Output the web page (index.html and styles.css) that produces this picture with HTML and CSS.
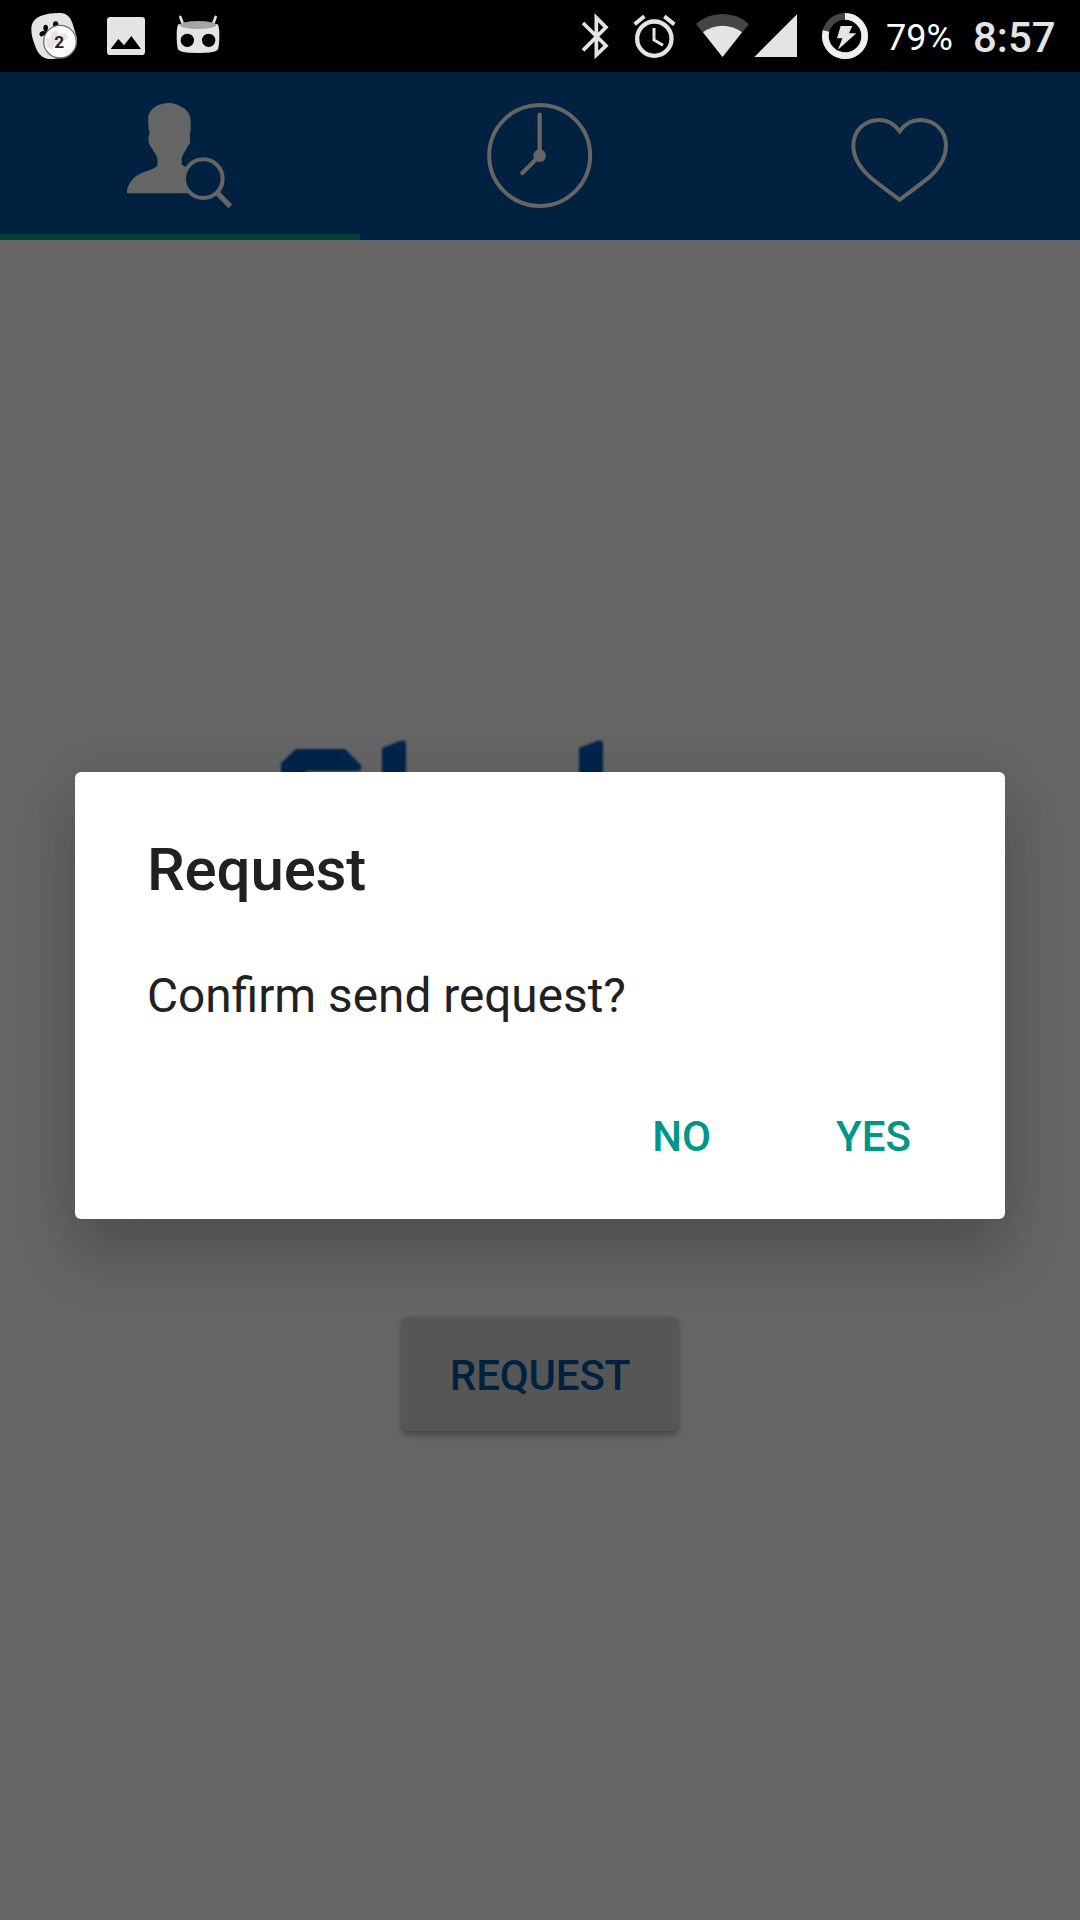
FILE: index.html
```html
<!DOCTYPE html>
<html lang="en">
<head>
<meta charset="utf-8">
<title>Request</title>
<link rel="stylesheet" href="styles.css">
</head>
<body>
<div class="screen">
  <header class="status">
    <div class="notifications">
      <svg class="paw" viewBox="84 0 156 216">
        <path fill="#e4e4e4" d="M94 88C94 68 104 55 124 47C146 39 166 38 184 39C204 41 214 56 220 78L230 112C234 147 214 164 190 170C172 175 160 178 146 177C124 174 112 158 104 134C98 118 94 104 94 88Z"/>
        <ellipse cx="137" cy="84" rx="7" ry="10"/>
        <ellipse cx="127" cy="101" rx="9" ry="7" transform="rotate(-35 127 101)"/>
        <ellipse cx="167" cy="73" rx="8" ry="9"/>
        <path d="M134 88L144 96L132 108Z"/>
        <circle cx="180" cy="125" r="49" fill="#fbfbfb" stroke="#707070" stroke-width="4"/>
        <path fill="#e5e5e5" d="M153 98l18-8 6 14 22-4 7 15-20 9-8 12-15-4-6 17-17-9-5-22 17-5Z"/>
        <text x="178" y="143" class="count">2</text>
      </svg>
      <svg class="picture" viewBox="312 0 132 216">
        <rect x="321" y="51" width="114" height="114" rx="10" fill="#e4e4e4"/>
        <path d="M332 147L355 117L372 136L394 108L423 147Z"/>
      </svg>
      <svg class="robot" viewBox="516 0 156 216">
        <path d="M541 51L548 70M647 51L640 70" stroke="#e4e4e4" stroke-width="8" stroke-linecap="round"/>
        <path fill="#e4e4e4" d="M536 72Q594 88 652 72Q658 76 658 105Q658 135 654 148Q650 159 594 159Q538 159 534 148Q530 135 530 105Q530 76 536 72Z"/>
        <ellipse cx="594" cy="75" rx="55" ry="12" fill="#a5a5a5"/>
        <circle cx="562" cy="121" r="20"/><circle cx="626" cy="121" r="20"/>
      </svg>
    </div>
    <div class="system">
      <svg class="bluetooth" viewBox="60 0 96 216">
        <path d="M69 69L138 137L109 165V53L138 82L69 151" fill="none" stroke="#e4e4e4" stroke-width="11"/>
      </svg>
      <svg class="alarm" viewBox="216 0 132 216">
        <g fill="none" stroke="#e4e4e4">
          <circle cx="283" cy="116" r="51.5" stroke-width="13"/>
          <path stroke-width="12" d="M224 73L253 49M313 49L343 73"/>
          <path stroke-width="9" d="M282 84V120L309 136"/>
        </g>
      </svg>
      <svg class="wifi" viewBox="405 0 168 216">
        <path fill="#454545" d="M408 72Q442 42 487.500 42T567 72L487.500 171Z"/>
        <path fill="#e4e4e4" d="M429 97Q455 77 487.500 77T546 97L487.500 171Z"/>
      </svg>
      <svg class="signal" viewBox="579 0 138 216">
        <path fill="#e4e4e4" d="M583 171L711 43V171Z"/>
      </svg>
      <svg class="battery" viewBox="30 0 150 216">
        <circle cx="105" cy="108" r="59" fill="none" stroke="#454545" stroke-width="20"/>
        <path d="M105 49A59 59 0 1 1 48 93" fill="none" stroke="#efefef" stroke-width="20"/>
        <path fill="#e4e4e4" d="M92 78H127L117 100H139L84 149L97 115H81Z"/>
      </svg>
      <span class="percent">79%</span>
      <span class="time">8:57</span>
    </div>
  </header>

  <nav class="tabs">
    <div class="tab active">
      <svg viewBox="81 69 318 318">
        <path fill="#656565" d="M81 340V330C88 304 106 286 130 277C151 269 163 266 172 257V233C164 215 151 201 147 190C144 176 145 169 149 160C144 143 144 126 145 109C151 84 176 69 208 69C225 69 237 77 249 83C263 91 270 104 272 119V150C268 162 270 172 270 188C263 202 251 217 245 234V254L263 264Q244 300 266 340Z"/>
        <g stroke="#656565">
          <circle cx="310" cy="296" r="58" fill="#00213f" stroke-width="12"/>
          <path stroke-width="16" d="M351 338L391 379"/>
        </g>
      </svg>
    </div>
    <div class="tab">
      <svg viewBox="81 69 318 318">
        <g fill="none" stroke="#656565" stroke-linecap="round">
          <circle cx="239" cy="226.500" r="151.500" stroke-width="12"/>
          <path stroke-width="13" d="M239 104V227L187 279"/>
        </g>
        <circle cx="239" cy="227" r="19" fill="#656565"/>
      </svg>
    </div>
    <div class="tab">
      <svg viewBox="81 69 318 318">
        <path fill="none" stroke="#656565" stroke-width="12" d="M239 154C222 130 204 120 178 120C132 120 100 153 100 197C100 232 121 264 149 290C171 309 204 333 239 359C274 333 307 309 330 290C357 264 378 232 378 197C378 153 346 120 300 120C274 120 256 130 239 154Z"/>
      </svg>
    </div>
  </nav>

  <main class="page">
    <svg class="logo" viewBox="0 0 360 66">
      <path d="M21 80V43L36 29H85L101 45V50L96 51H47L40 60V80ZM122 80V28L140 21Q146 19 146 24V80ZM319 80V28L337 21Q343 19 343 24V80Z"/>
    </svg>
    <button class="request">REQUEST</button>
  </main>

  <section class="dialog">
    <h1>Request</h1>
    <p>Confirm send request?</p>
    <div class="actions"><button>NO</button><button>YES</button></div>
  </section>
</div>
</body>
</html>
```

FILE: styles.css
```css
* { box-sizing: border-box; }
body { margin: 0; background: #656565; font-family: Roboto, sans-serif; }
svg { display: block; flex: none; }
h1, p { margin: 0; }
button { padding: 0; border: 0; background: none; font: 500 42px/50px Roboto, sans-serif; }

.screen { position: relative; width: 1080px; height: 1920px; overflow: hidden; display: flex; flex-direction: column; }

.status { flex: none; height: 72px; background: #000; display: flex; justify-content: space-between; padding: 0 24px 0 28px; }
.status svg { height: 72px; }
.notifications, .system { display: flex; align-items: center; }
.notifications { gap: 24px; }
.paw, .robot { width: 52px; }
.picture { width: 44px; }
.count { font: 700 52px Roboto, sans-serif; text-anchor: middle; fill: #222; }
.bluetooth { width: 32px; margin-right: 20px; }
.alarm { width: 44px; margin-right: 19px; }
.wifi { width: 56px; margin-right: 2px; }
.signal { width: 46px; margin-right: 21px; }
.battery { width: 50px; margin-right: 16px; }
.percent { width: 87px; color: #fff; font-size: 36px; line-height: 42px; padding-top: 3px; }
.time { width: 83px; color: #e4e4e4; font-size: 42px; font-weight: 500; line-height: 50px; padding-top: 3px; }

.tabs { flex: none; height: 168px; background: #00213f; display: grid; grid-template-columns: repeat(3, 1fr); }
.tab { padding: 31px 127px 0; border-bottom: 6px solid transparent; }
.tab.active { border-color: #004038; }
.tab svg { width: 106px; height: 106px; }

.page { flex: 1; display: flex; flex-direction: column; }
.logo { width: 360px; height: 66px; margin: 480px 0 0 260px; fill: #00254b; filter: blur(1px); }
.request { align-self: center; width: 276px; height: 114px; margin-top: 531px; padding-top: 3px; border-radius: 6px; background: #565656; color: #00213f; letter-spacing: -.15px; box-shadow: 0 4px 6px rgba(0, 0, 0, .28), 0 0 4px rgba(0, 0, 0, .06); }

.dialog { position: absolute; left: 75px; top: 772px; width: 930px; height: 447px; padding: 63px 36px 28px 72px; background: #fff; border-radius: 6px; color: #212121; display: flex; flex-direction: column; box-shadow: 0 36px 60px rgba(0, 0, 0, .2), 0 0 50px rgba(0, 0, 0, .06); }
.dialog h1 { font-size: 60px; font-weight: 500; line-height: 70px; letter-spacing: -.15px; }
.dialog p { margin-top: 63px; font-size: 47.75px; line-height: 56px; }
.actions { margin-top: auto; display: flex; justify-content: flex-end; }
.actions button { width: 192px; height: 108px; padding-left: 1px; color: #009688; }
```
